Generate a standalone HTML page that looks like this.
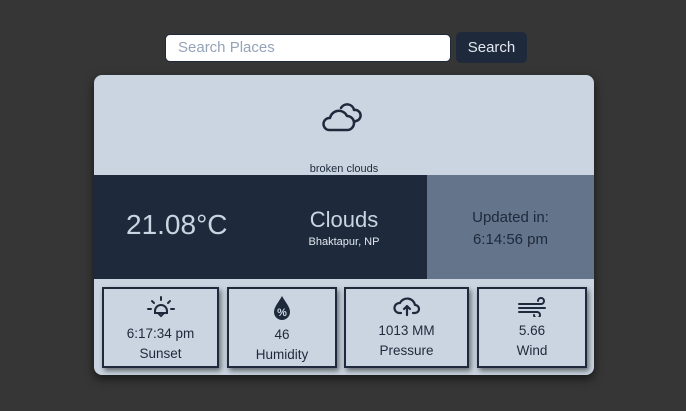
<!DOCTYPE html>
<html><head><style>
body{margin:0;width:686px;height:411px;background:#363636;font-family:"Liberation Sans",sans-serif;position:relative;overflow:hidden}
.abs{position:absolute}
.inp{left:165px;top:34px;width:286px;height:28px;background:#fff;border-radius:5px;box-sizing:border-box;border:1px solid #1e293b;color:#94a3b8;font-size:15px;line-height:26px;padding-left:12px}
.btn{left:456px;top:32px;width:71px;height:31px;background:#1e293b;border-radius:5px;color:#e2e8f0;font-size:15px;line-height:31px;text-align:center}
.card{left:94px;top:75px;width:500px;height:300px;background:#cbd5e1;border-radius:8px;overflow:hidden;box-shadow:0 4px 10px rgba(0,0,0,.6)}
.box{position:absolute;top:212px;height:81px;border:2px solid #1e293b;box-sizing:border-box;box-shadow:2px 3px 5px rgba(0,0,0,.5);text-align:center;color:#1e293b;font-size:13.5px}
.box svg{display:block;margin:6px auto 0}
</style></head><body>
<div class="abs inp">Search Places</div>
<div class="abs btn">Search</div>
<div class="abs card">
 <svg class="abs" style="left:227px;top:25px" width="44" height="34" viewBox="0 0 44 34" fill="none" stroke="#1e293b" stroke-width="2.5" stroke-linecap="round" stroke-linejoin="round">
  <path d="M8 30 H26 A7 7 0 0 0 26 16 A9 9 0 0 0 9 18 A6 6 0 0 0 8 30 Z"/>
  <path d="M20 8 A7 7 0 0 1 33 10 A5.5 5.5 0 0 1 35 21 L33 22"/>
 </svg>
 <div class="abs" style="left:0;width:500px;top:88px;text-align:center;font-size:11px;color:#1e293b">broken clouds</div>
 <div class="abs" style="left:0;top:100px;width:333px;height:104px;background:#1e293b"></div>
 <div class="abs" style="left:333px;top:100px;width:167px;height:104px;background:#64748b"></div>
 <div class="abs" style="left:32px;top:134px;font-size:28px;color:#cbd5e1">21.08°C</div>
 <div class="abs" style="left:200px;top:132px;width:100px;text-align:center;font-size:22px;color:#cbd5e1">Clouds</div>
 <div class="abs" style="left:200px;top:161px;width:100px;text-align:center;font-size:11px;color:#e2e8f0">Bhaktapur, NP</div>
 <div class="abs" style="left:333px;top:132px;width:167px;text-align:center;font-size:15px;line-height:22px;color:#1e293b">Updated in:<br>6:14:56 pm</div>
 <div class="box" style="left:8px;width:117px">
  <svg width="30" height="24" viewBox="0 0 30 24" fill="none" stroke="#1e293b" stroke-width="2" stroke-linecap="round"><path d="M15 2v3M6 6l2 2M24 6l-2 2M2 14h3M25 14h3M9 16a6 6 0 0 1 12 0M9 16v2h12v-2M12 18l3 3 3-3"/></svg>
  <div style="margin-top:7px">6:17:34 pm</div><div style="margin-top:5px">Sunset</div></div>
 <div class="box" style="left:133px;width:110px">
  <svg width="20" height="26" viewBox="0 0 20 26"><path d="M10 1C6 8 2 12 2 17a8 8 0 0 0 16 0C18 12 14 8 10 1Z" fill="#1e293b"/><text x="10" y="21" font-size="11" font-weight="bold" fill="#cbd5e1" text-anchor="middle" font-family="Liberation Sans">%</text></svg>
  <div style="margin-top:6px">46</div><div style="margin-top:5px">Humidity</div></div>
 <div class="box" style="left:250px;width:125px">
  <svg width="28" height="22" viewBox="0 0 28 22" fill="none" stroke="#1e293b" stroke-width="2.2" stroke-linecap="round" stroke-linejoin="round"><path d="M8 18H6a5 5 0 0 1 1-10 8 8 0 0 1 15 2 4 4 0 0 1 0 8h-2M14 20v-8M11 14l3-3 3 3"/></svg>
  <div style="margin-top:6px">1013 MM</div><div style="margin-top:5px">Pressure</div></div>
 <div class="box" style="left:383px;width:110px">
  <svg width="32" height="22" viewBox="0 0 32 22" fill="none" stroke="#1e293b" stroke-width="2" stroke-linecap="round"><path d="M3 9h22a3 3 0 1 0-3-3M3 13h26M3 17h18a3 3 0 1 1-3 3"/></svg>
  <div style="margin-top:6px">5.66</div><div style="margin-top:5px">Wind</div></div>
</div>
</body></html>
